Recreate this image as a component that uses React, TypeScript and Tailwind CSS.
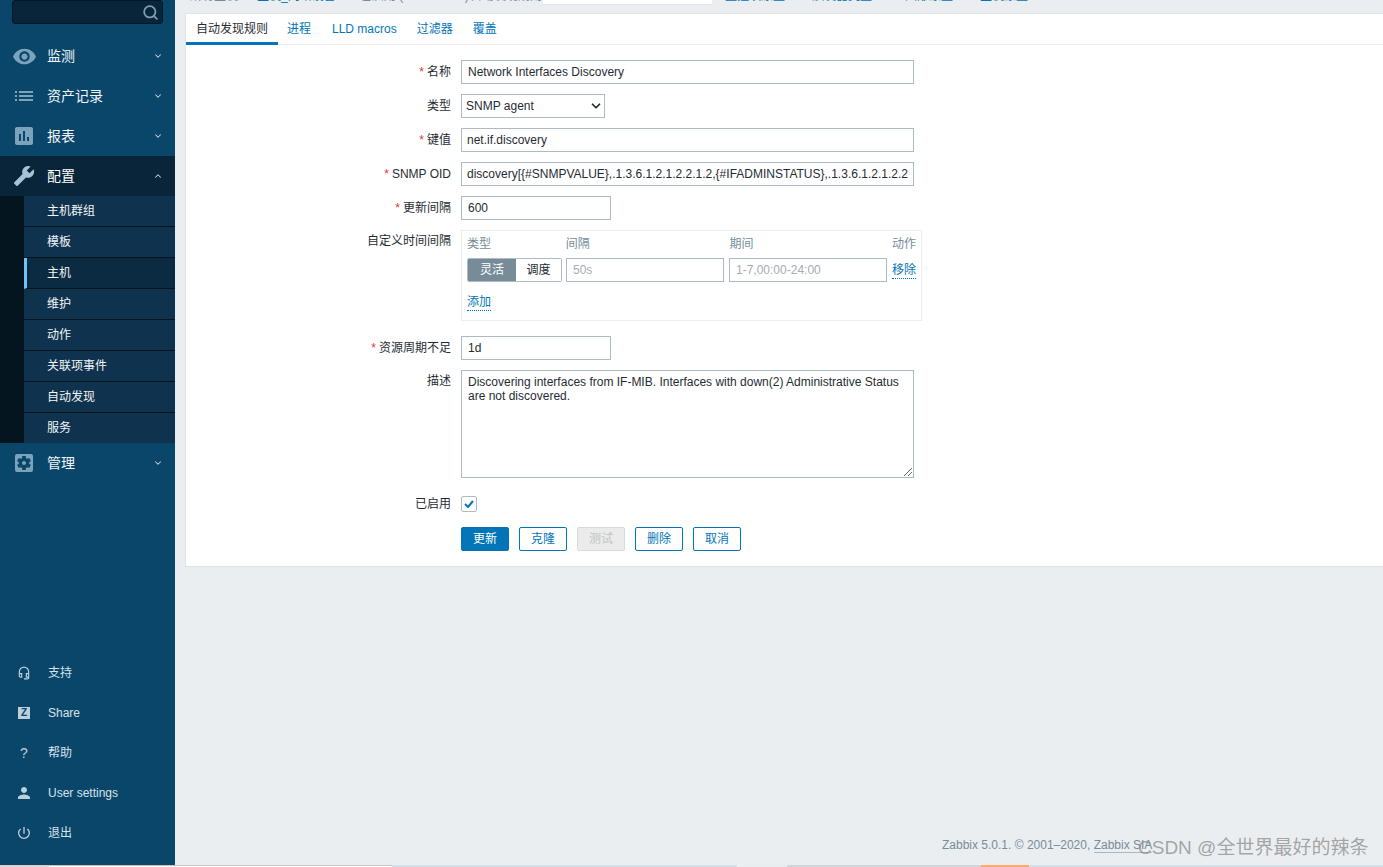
import React from "react";
import { ChevronDown, ChevronUp, Search } from "lucide-react";
import { MdRemoveRedEye, MdList, MdAssessment, MdBuild, MdSettingsApplications, MdOutlineHeadsetMic, MdPerson, MdPowerSettingsNew } from "react-icons/md";

const font = "font-['Arial','Liberation_Sans','Noto_Sans_CJK_SC',sans-serif]";

function Nav({ icon, label, open, active }: { icon: React.ReactNode; label: string; open?: boolean; active?: boolean }) {
  return (
    <div className={`h-10 flex items-center pl-[12px] pr-3 ${active ? "bg-[#082539]" : ""}`}>
      <div className="w-[35px] flex justify-start">{icon}</div>
      <span className={`text-[14px] ${active ? "text-white" : "text-[#f2f5f7]"}`}>{label}</span>
      <span className="ml-auto text-[#c5d6e0]">
        {open ? <ChevronUp size={10} strokeWidth={2.5} /> : <ChevronDown size={10} strokeWidth={2.5} />}
      </span>
    </div>
  );
}

function Sub({ label, active, last }: { label: string; active?: boolean; last?: boolean }) {
  const state = active ? "bg-[#0a2b41] border-l-[3px] border-l-[#75c1f5] pl-[20px]" : "bg-[#0f334e] pl-[23px]";
  const edge = last ? "h-[30px]" : "h-[31px] border-b border-[#04151f]";
  return <div className={`flex items-center text-[12px] text-[#f2f5f7] ${edge} ${state}`}>{label}</div>;
}

function Foot({ icon, label }: { icon: React.ReactNode; label: string }) {
  return (
    <div className="h-10 flex items-center">
      <div className="w-[48px] flex justify-center">{icon}</div>
      <span className="text-[12px] text-[#d7e3ea]">{label}</span>
    </div>
  );
}

function Row({ label, req, children, mt, top }: { label: string; req?: boolean; children: React.ReactNode; mt: string; top?: boolean }) {
  return (
    <div className={`flex ${mt} ${top ? "items-start" : "items-center"}`}>
      <div className={`w-[265px] text-right text-[12px] text-[#1f2c33] ${top ? "pt-[2px]" : ""}`}>
        {req && <span className="text-[#e33734] mr-[3px]">*</span>}
        {label}
      </div>
      <div className="ml-[10px]">{children}</div>
    </div>
  );
}

const inputCls = "h-6 border border-[#acbbc2] bg-white flex items-center text-[12px] text-[#1f2c33] overflow-hidden whitespace-nowrap";

function Btn({ label, kind }: { label: string; kind: "primary" | "outline" | "disabled" }) {
  const c =
    kind === "primary"
      ? "bg-[#0275b8] border-[#0275b8] text-white"
      : kind === "disabled"
        ? "bg-[#ebebeb] border-[#d5dadc] text-[#c0c4c6]"
        : "bg-white border-[#0275b8] text-[#0275b8]";
  return <div className={`w-[48px] h-6 rounded-[2px] border flex items-center justify-center text-[12px] ${c}`}>{label}</div>;
}

function Clip({ text, w, cls }: { text: string; w: string; cls: string }) {
  return <span className={`block shrink-0 whitespace-nowrap text-[12px] leading-[14px] -mt-[11px] ${w} ${cls}`}>{text}</span>;
}

export default function App() {
  return (
    <div className={`${font} w-[1383px] h-[867px] overflow-hidden flex flex-col bg-[#ebeef0] relative`}>
      <div className="h-[865px] flex">
        <aside className="w-[175px] h-full shrink-0 bg-[#0a466a] flex flex-col pb-[12px]">
          <div className="mx-3 w-[151px] h-6 rounded-[3px] bg-[#082539] border border-[#041722] flex items-center justify-end pr-[3px] shrink-0">
            <Search size={17} strokeWidth={2.5} className="text-[#7f9fb2]" />
          </div>
          <div className="mt-[12px] flex flex-col">
            <Nav label="监测" icon={<MdRemoveRedEye size={25} className="text-[#7ba3bc]" />} />
            <Nav label="资产记录" icon={<MdList size={24} className="text-[#7ba3bc]" />} />
            <Nav label="报表" icon={<MdAssessment size={24} className="text-[#7ba3bc]" />} />
            <Nav label="配置" open active icon={<MdBuild size={22} className="ml-[1px] text-[#a4c3d6] -scale-x-100" />} />
            <div className="flex bg-[#04151f]">
              <div className="w-6 shrink-0" />
              <div className="flex-1">
                <Sub label="主机群组" />
                <Sub label="模板" />
                <Sub label="主机" active />
                <Sub label="维护" />
                <Sub label="动作" />
                <Sub label="关联项事件" />
                <Sub label="自动发现" />
                <Sub label="服务" last />
              </div>
            </div>
            <Nav label="管理" icon={<MdSettingsApplications size={24} className="text-[#7ba3bc]" />} />
          </div>
          <div className="mt-auto flex flex-col">
            <Foot label="支持" icon={<MdOutlineHeadsetMic size={14} className="text-[#bcd0dc]" />} />
            <Foot
              label="Share"
              icon={<div className="w-3 h-3 bg-[#bcd0dc] flex items-center justify-center text-[10px] font-bold text-[#0a466a] leading-none">Z</div>}
            />
            <Foot label="帮助" icon={<span className="text-[14px] text-[#bcd0dc]">?</span>} />
            <Foot label="User settings" icon={<MdPerson size={18} className="text-[#bcd0dc]" />} />
            <Foot label="退出" icon={<MdPowerSettingsNew size={16} className="text-[#bcd0dc]" />} />
          </div>
        </aside>

        <main className="flex-1 min-w-0 flex flex-col pl-[10px]">
          <div className="h-[13px] overflow-hidden shrink-0 flex items-start pl-[5px]">
            <Clip text="所有主机" w="w-[67px]" cls="text-[#768d99]" />
            <Clip text="主机_网络设备" w="w-[103px]" cls="text-[#0275b8]" />
            <Clip text="已启用 (ZBX SNMP)" w="w-[110px]" cls="text-[#768d99]" />
            <Clip text="自动发现规则" w="w-[73px]" cls="text-[#768d99]" />
            <div className="w-[169px] h-[5px] shrink-0 bg-white border-b border-[#dfe4e7]" />
            <span className="w-[13px] shrink-0" />
            <Clip text="监控项原型" w="w-[87px]" cls="text-[#0275b8]" />
            <Clip text="触发器类型" w="w-[93px]" cls="text-[#0275b8]" />
            <Clip text="图形原型" w="w-[75px]" cls="text-[#0275b8]" />
            <Clip text="主机原型" w="w-[60px]" cls="text-[#0275b8]" />
          </div>
          <section className="h-[554px] bg-white border border-[#dfe4e7] border-r-0 shrink-0">
            <div className="h-[31px] flex items-center border-b border-[#ebeef0] text-[12px] text-[#0275b8]">
              <div className="h-[31px] w-[92px] flex items-center justify-center text-[#1f2c33] border-b-[3px] border-[#0275b8] pt-[2px]">自动发现规则</div>
              <span className="ml-[9px]">进程</span>
              <span className="ml-[21px]">LLD macros</span>
              <span className="ml-[20px]">过滤器</span>
              <span className="ml-[20px]">覆盖</span>
            </div>

            <div className="pt-[15px]">
              <Row label="名称" req mt="mt-0">
                <div className={`${inputCls} px-[6px] w-[453px]`}>Network Interfaces Discovery</div>
              </Row>
              <Row label="类型" mt="mt-[10px]">
                <div className="h-6 w-[144px] border border-[#acbbc2] bg-white pl-[4px] pr-[1px] flex items-center justify-between text-[12px] text-[#1f2c33] whitespace-nowrap">
                  SNMP agent
                  <ChevronDown size={14} strokeWidth={3} className="text-[#1f2c33]" />
                </div>
              </Row>
              <Row label="键值" req mt="mt-[10px]">
                <div className={`${inputCls} px-[5px] w-[453px]`}>net.if.discovery</div>
              </Row>
              <Row label="SNMP OID" req mt="mt-[10px]">
                <div className={`${inputCls} px-[5px] w-[453px]`}>discovery[{"{#SNMPVALUE}"},.1.3.6.1.2.1.2.2.1.2,{"{#IFADMINSTATUS}"},.1.3.6.1.2.1.2.2</div>
              </Row>
              <Row label="更新间隔" req mt="mt-[10px]">
                <div className={`${inputCls} px-[6px] w-[150px]`}>600</div>
              </Row>
              <Row label="自定义时间间隔" mt="mt-[10px]" top>
                <div className="w-[461px] h-[91px] border border-[#ebeef0] px-[5px] pt-[5px] text-[12px]">
                  <div className="flex text-[#768d99] h-[15px] items-center whitespace-nowrap">
                    <span className="w-[99px]">类型</span>
                    <span className="w-[164px]">间隔</span>
                    <span className="w-[163px]">期间</span>
                    <span>动作</span>
                  </div>
                  <div className="flex items-center mt-[7px] whitespace-nowrap">
                    <div className="w-[95px] h-6 flex rounded-[2px] overflow-hidden border border-[#acbbc2]">
                      <div className="w-[48px] bg-[#768d99] text-white flex items-center justify-center">灵活</div>
                      <div className="flex-1 bg-white text-[#1f2c33] flex items-center justify-center">调度</div>
                    </div>
                    <div className="h-6 w-[158px] ml-[4px] border border-[#acbbc2] bg-white px-[6px] flex items-center text-[#a5adb1]">50s</div>
                    <div className="h-6 w-[158px] ml-[5px] border border-[#acbbc2] bg-white px-[6px] flex items-center text-[#a5adb1]">1-7,00:00-24:00</div>
                    <span className="ml-[5px] mt-[2px] text-[#0275b8] border-b border-dotted border-[#0275b8] leading-[15px]">移除</span>
                  </div>
                  <div className="mt-[11px]">
                    <span className="text-[#0275b8] border-b border-dotted border-[#0275b8] leading-[15px] inline-block">添加</span>
                  </div>
                </div>
              </Row>
              <Row label="资源周期不足" req mt="mt-[15px]">
                <div className={`${inputCls} px-[6px] w-[150px]`}>1d</div>
              </Row>
              <Row label="描述" mt="mt-[10px]" top>
                <div className="w-[453px] h-[108px] border border-[#acbbc2] px-[6px] py-[4px] text-[12px] leading-[14px] text-[#1f2c33] relative">
                  Discovering interfaces from IF-MIB. Interfaces with down(2) Administrative Status are not discovered.
                  <svg width="10" height="10" viewBox="0 0 10 10" className="absolute right-0 bottom-0">
                    <path d="M1 9 L9 1 M5 9 L9 5" stroke="#666" strokeWidth="1" />
                  </svg>
                </div>
              </Row>
              <Row label="已启用" mt="mt-[17px]">
                <div className="w-4 h-4 rounded-[2px] border border-[#acbbc2] flex items-center justify-center">
                  <svg width="10" height="8" viewBox="0 0 10 8">
                    <path d="M1 4 L4 7 L9 1" fill="none" stroke="#0275b8" strokeWidth="2" />
                  </svg>
                </div>
              </Row>
              <div className="flex ml-[275px] mt-[14px] gap-[10px]">
                <Btn label="更新" kind="primary" />
                <Btn label="克隆" kind="outline" />
                <Btn label="测试" kind="disabled" />
                <Btn label="删除" kind="outline" />
                <Btn label="取消" kind="outline" />
              </div>
            </div>
          </section>
          <div className="mt-auto pb-[11px] pl-[757px] text-[12px] text-[#768d99] whitespace-nowrap">
            Zabbix 5.0.1. © 2001–2020, <span className="border-b border-[#a9b8c1]">Zabbix SIA</span>
          </div>
        </main>
      </div>

      <div className="h-[2px] flex shrink-0">
        <div className="w-[49px] bg-[#d4d6d8]" />
        <div className="w-[343px] bg-white border-t border-[#c4c6c8]" />
        <div className="w-[345px] bg-[#d6e0e8]" />
        <div className="w-[50px] bg-[#e8edf0]" />
        <div className="w-[194px] bg-[#d0d8dd]" />
        <div className="w-[48px] bg-[#f5ad75]" />
        <div className="flex-1 bg-[#d6e0e8]" />
      </div>

      <div className="absolute left-[1138px] top-[836px] text-[19px] leading-6 text-[#8c8c8c]/75 whitespace-nowrap">CSDN @全世界最好的辣条</div>
    </div>
  );
}
